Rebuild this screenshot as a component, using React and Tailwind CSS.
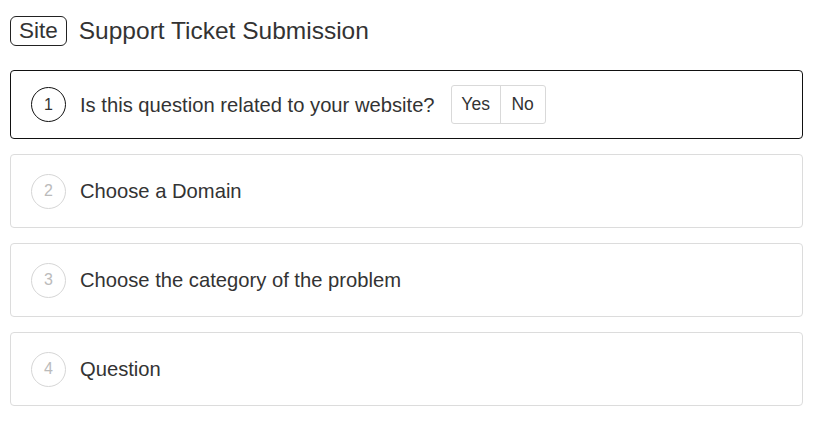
import React from 'react';

const Step = ({ n, label, active, children }) => (
  <div
    className={`flex items-center rounded-[4px] border bg-white pl-[20px] ${
      active ? 'h-[69px] border-[#111]' : 'h-[74px] border-[#dcdcdc]'
    }`}
  >
    <div
      className={`flex h-[35px] w-[35px] items-center justify-center rounded-full border text-[16px] ${
        active ? 'border-[#111] text-[#333]' : 'border-[#d6d6d6] text-[#bbb]'
      }`}
    >
      {n}
    </div>
    <span className="ml-[14px] pt-[1px] text-[20.2px] text-[#333]">{label}</span>
    {children}
  </div>
);

export default function App() {
  return (
    <div className="min-h-[432px] w-[829px] bg-white pl-[10px] pt-[16px] font-['Liberation_Sans',Arial,sans-serif]">
      <div className="flex h-[30px] items-center">
        <span className="flex h-[30px] items-center rounded-[6px] border border-[#222] px-[8px] text-[22.5px] text-[#333]">
          Site
        </span>
        <span className="ml-[12px] text-[24.5px] text-[#333]">Support Ticket Submission</span>
      </div>

      <div className="mt-[24px] flex w-[793px] flex-col gap-[15px]">
        <Step n="1" label="Is this question related to your website?" active>
          <div className="ml-[16px] flex h-[39px] overflow-hidden rounded-[3px] border border-[#d9d9d9] text-[17.5px] text-[#333]">
            <button className="w-[49px] border-r border-[#d9d9d9]">Yes</button>
            <button className="w-[44px]">No</button>
          </div>
        </Step>
        <Step n="2" label="Choose a Domain" />
        <Step n="3" label="Choose the category of the problem" />
        <Step n="4" label="Question" />
      </div>
    </div>
  );
}
